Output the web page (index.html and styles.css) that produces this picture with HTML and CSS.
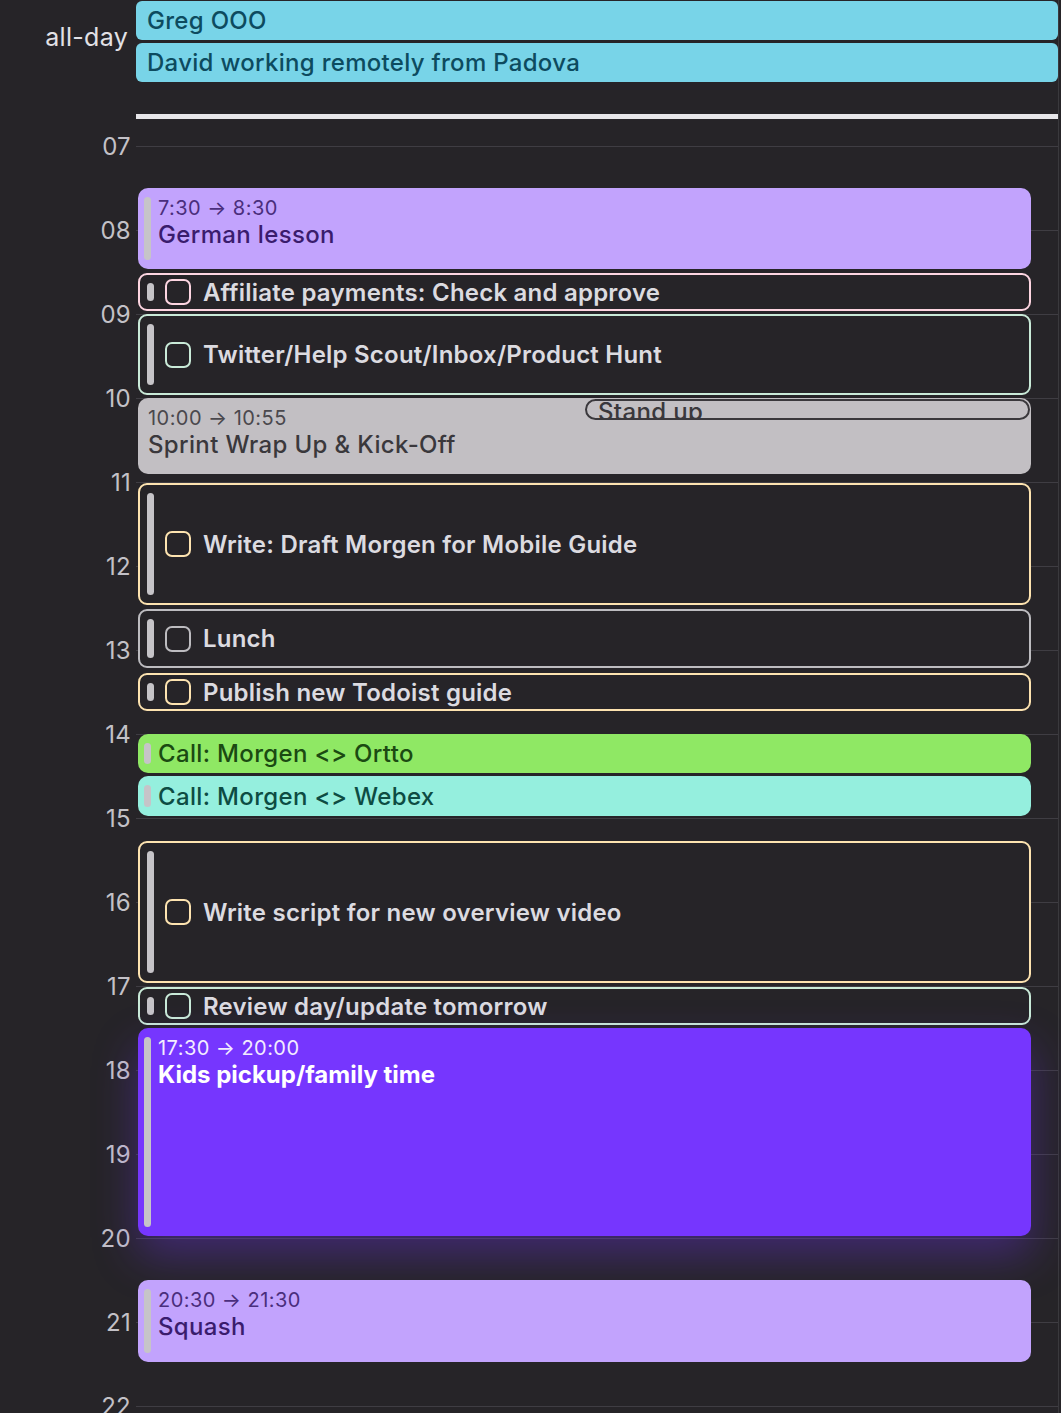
FILE: index.html
```html
<!DOCTYPE html>
<html>
<head>
<meta charset="utf-8">
<link rel="stylesheet" href="styles.css">
</head>
<body>
<div class="cal">
  <div class="allday">
    <div class="allday-label">all-day</div>
    <div class="allday-events">
      <div class="allday-ev">Greg OOO</div>
      <div class="allday-ev">David working remotely from Padova</div>
    </div>
  </div>
  <div class="divider-row"><div class="divider"></div></div>
  <div class="grid">
    <div class="hours">
      <div class="hour"><span class="hour-label">07</span><span class="hour-line"></span></div>
      <div class="hour"><span class="hour-label">08</span><span class="hour-line"></span></div>
      <div class="hour"><span class="hour-label">09</span><span class="hour-line"></span></div>
      <div class="hour"><span class="hour-label">10</span><span class="hour-line"></span></div>
      <div class="hour"><span class="hour-label">11</span><span class="hour-line"></span></div>
      <div class="hour"><span class="hour-label">12</span><span class="hour-line"></span></div>
      <div class="hour"><span class="hour-label">13</span><span class="hour-line"></span></div>
      <div class="hour"><span class="hour-label">14</span><span class="hour-line"></span></div>
      <div class="hour"><span class="hour-label">15</span><span class="hour-line"></span></div>
      <div class="hour"><span class="hour-label">16</span><span class="hour-line"></span></div>
      <div class="hour"><span class="hour-label">17</span><span class="hour-line"></span></div>
      <div class="hour"><span class="hour-label">18</span><span class="hour-line"></span></div>
      <div class="hour"><span class="hour-label">19</span><span class="hour-line"></span></div>
      <div class="hour"><span class="hour-label">20</span><span class="hour-line"></span></div>
      <div class="hour"><span class="hour-label">21</span><span class="hour-line"></span></div>
      <div class="hour"><span class="hour-label">22</span><span class="hour-line"></span></div>
    </div>

    <div class="events">
      <div class="ev filled lavender" style="top:42px;height:81px">
        <span class="bar"></span>
        <div class="ev-body"><div class="ev-time">7:30 → 8:30</div><div class="ev-title">German lesson</div></div>
      </div>

      <div class="ev task pink" style="top:127px;height:38px">
        <span class="bar"></span><span class="check"></span><span class="task-title">Affiliate payments: Check and approve</span>
      </div>

      <div class="ev task mint" style="top:168px;height:81px">
        <span class="bar"></span><span class="check"></span><span class="task-title">Twitter/Help Scout/Inbox/Product Hunt</span>
      </div>

      <div class="ev filled grey nobar" style="top:252px;height:76px">
        <div class="ev-body"><div class="ev-time">10:00 → 10:55</div><div class="ev-title">Sprint Wrap Up &amp; Kick-Off</div></div>
      </div>

      <div class="standup" style="top:253px;left:447px;width:445px;height:21px">Stand up</div>

      <div class="ev task peach" style="top:337px;height:122px">
        <span class="bar"></span><span class="check"></span><span class="task-title">Write: Draft Morgen for Mobile Guide</span>
      </div>

      <div class="ev task silver" style="top:463px;height:59px">
        <span class="bar"></span><span class="check"></span><span class="task-title">Lunch</span>
      </div>

      <div class="ev task peach" style="top:527px;height:38px">
        <span class="bar"></span><span class="check"></span><span class="task-title">Publish new Todoist guide</span>
      </div>

      <div class="ev filled green single" style="top:588px;height:39px">
        <span class="bar"></span>
        <div class="ev-body"><div class="ev-title">Call: Morgen &lt;&gt; Ortto</div></div>
      </div>

      <div class="ev filled aqua single" style="top:630px;height:40px">
        <span class="bar"></span>
        <div class="ev-body"><div class="ev-title">Call: Morgen &lt;&gt; Webex</div></div>
      </div>

      <div class="ev task peach" style="top:695px;height:142px">
        <span class="bar"></span><span class="check"></span><span class="task-title">Write script for new overview video</span>
      </div>

      <div class="ev task mint" style="top:841px;height:38px">
        <span class="bar"></span><span class="check"></span><span class="task-title">Review day/update tomorrow</span>
      </div>

      <div class="ev filled purple" style="top:882px;height:208px">
        <span class="bar"></span>
        <div class="ev-body"><div class="ev-time">17:30 → 20:00</div><div class="ev-title">Kids pickup/family time</div></div>
      </div>

      <div class="ev filled lavender" style="top:1134px;height:82px">
        <span class="bar"></span>
        <div class="ev-body"><div class="ev-time">20:30 → 21:30</div><div class="ev-title">Squash</div></div>
      </div>
    </div>
  </div>
</div>
</body>
</html>
```

FILE: styles.css
```css
* { box-sizing: border-box; }

html, body {
  margin: 0;
  padding: 0;
  background: #262428;
  overflow: hidden;
  height: 1413px;
}

body {
  font-family: Inter, "Noto Sans", "Liberation Sans", sans-serif;
  color: #dcdbe0;
}

.cal {
  width: 1059px;
  border-right: 1px solid #3a393d;
  min-height: 1413px;
}

/* all-day */
.allday {
  display: flex;
  padding-top: 1px;
}

.allday-label {
  width: 136px;
  padding-right: 8px;
  text-align: right;
  font-size: 25px;
  letter-spacing: 0.3px;
  line-height: 28px;
  margin-top: 22px;
  color: #e2e1e6;
}

.allday-events {
  flex: 1;
  display: flex;
  flex-direction: column;
  gap: 3px;
}

.allday-ev {
  height: 39px;
  line-height: 39px;
  padding-left: 11px;
  background: #78d4e8;
  color: #0d4b5f;
  border-radius: 6px;
  font-size: 24px;
  font-weight: 500;
  letter-spacing: 0.3px;
  white-space: nowrap;
}

.divider-row {
  padding-left: 136px;
  margin-top: 32px;
  margin-bottom: 27px;
}

.divider {
  height: 5px;
  background: #e7e6ea;
}

/* grid */
.grid {
  position: relative;
}

.hour {
  display: flex;
  height: 84px;
  align-items: flex-start;
}

.hour-label {
  width: 131px;
  margin-top: -13px;
  line-height: 28px;
  text-align: right;
  font-size: 24px;
  letter-spacing: 0.3px;
  color: #c3c1c7;
}

.hour-line {
  flex: 1;
  margin-left: 5px;
  border-top: 1px solid #3f3d43;
}

.events {
  position: absolute;
  top: 0;
  left: 138px;
  width: 893px;
  height: 100%;
}

.ev {
  position: absolute;
  left: 0;
  right: 0;
  display: flex;
  overflow: hidden;
}

/* filled events */
.filled {
  border-radius: 10px;
}

.filled .bar {
  flex: none;
  width: 7px;
  margin: 9px 7px 9px 6px;
  border-radius: 4px;
  background: #c6c4c8;
}

.ev-body {
  padding-top: 8px;
  white-space: nowrap;
}

.nobar .ev-body {
  padding-left: 10px;
  padding-top: 8px;
}

.single .ev-body {
  padding-top: 0;
  display: flex;
  align-items: center;
}

.ev-time {
  font-size: 20px;
  letter-spacing: 0.45px;
  line-height: normal;
}

.ev-title {
  font-size: 24px;
  letter-spacing: 0.35px;
  line-height: normal;
  font-weight: 500;
}

.lavender { background: #c2a3fd; color: #3a1c6d; }
.lavender .ev-time { color: #4a2e7c; }
.grey { background: #c2bfc3; color: #3a383c; }
.grey .ev-time { color: #4a484d; }
.green { background: #8fe864; color: #1b4a12; }
.aqua { background: #95efde; color: #0d4c43; }
.purple {
  background: #7636fe;
  color: #ffffff;
  box-shadow: 0 20px 44px rgba(118, 54, 254, 0.34);
}
.purple .ev-title { font-weight: 700; letter-spacing: 0; }
.purple .ev-time { color: #f2ecff; }

/* tasks */
.task {
  align-items: center;
  border: 2px solid #bdbcc0;
  border-radius: 9px;
  background: #262428;
}

.task .bar {
  flex: none;
  align-self: stretch;
  width: 7px;
  margin: 8px 11px 8px 7px;
  border-radius: 4px;
  background: #c6c4c8;
}

.check {
  flex: none;
  width: 26px;
  height: 26px;
  border: 2px solid #bdbcc0;
  border-radius: 7px;
  margin-right: 12px;
}

.task-title {
  font-size: 24px;
  font-weight: 600;
  letter-spacing: 0.22px;
  color: #dcdbe0;
  white-space: nowrap;
}

.pink, .pink .check { border-color: #fdd5e1; }
.mint, .mint .check { border-color: #c9ead8; }
.peach, .peach .check { border-color: #fde3b0; }
.silver, .silver .check { border-color: #bdbcc0; }

/* overlapping standup */
.standup {
  position: absolute;
  border: 2px solid #3a383c;
  border-radius: 11px;
  background: #c2bfc3;
  color: #3a383c;
  font-size: 24px;
  font-weight: 500;
  letter-spacing: 0.35px;
  line-height: 22px;
  padding-left: 11px;
  overflow: hidden;
  white-space: nowrap;
}
```
